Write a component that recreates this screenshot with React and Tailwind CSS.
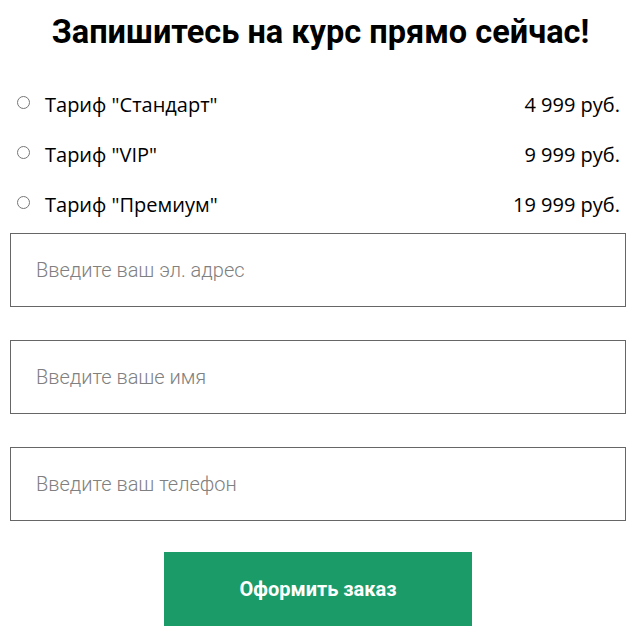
export default function App() {
  const plans = [
    { name: 'Тариф "Стандарт"', price: "4 999 руб." },
    { name: 'Тариф "VIP"', price: "9 999 руб." },
    { name: 'Тариф "Премиум"', price: "19 999 руб." },
  ];
  const fields = ["Введите ваш эл. адрес", "Введите ваше имя", "Введите ваш телефон"];

  return (
    <div className="w-[641px] h-[638px] bg-white pl-[10px] pr-[15px] pt-[10px]">
      <h1 className="text-center text-[32.5px] leading-[44px] font-bold text-black font-['Roboto',sans-serif] pl-[5px]">
        Запишитесь на курс прямо сейчас!
      </h1>

      {/* PLANS */}
      <div className="mt-[26px] pl-[7px] pr-[6px] font-['Open_Sans',sans-serif] text-[20px] text-black">
        {plans.map((p, i) => (
          <label key={i} className="flex items-center justify-between h-[50px]">
            <span className="flex items-center gap-[15px]">
              <input type="radio" name="plan" className="w-[13px] h-[13px] m-0 -mt-[5px] accent-gray-500" />
              <span>{p.name}</span>
            </span>
            <span>{p.price}</span>
          </label>
        ))}
      </div>

      {/* FORM */}
      <div className="flex flex-col gap-[33px] mt-[3px]">
        {fields.map((f) => (
          <input
            key={f}
            type="text"
            placeholder={f}
            className="h-[74px] w-full border border-[#666] px-[25px] text-[20px] font-light font-['Roboto',sans-serif] placeholder:text-[#808080] outline-none"
          />
        ))}
      </div>

      <div className="flex justify-center mt-[31px]">
        <button className="w-[308px] h-[74px] bg-[#1a9b68] text-white text-[20px] font-bold font-['Roboto',sans-serif]">
          Оформить заказ
        </button>
      </div>
    </div>
  );
}
